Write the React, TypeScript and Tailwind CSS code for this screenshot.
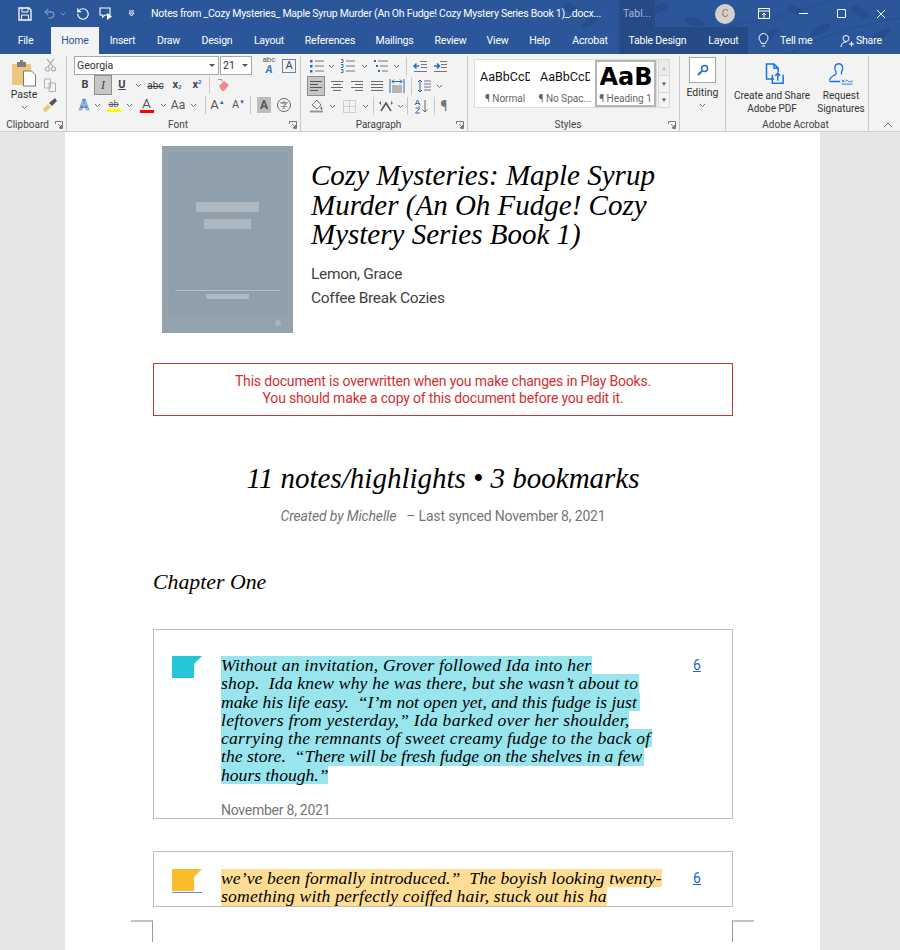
import React from "react";
import { RotateCcw, Undo2 } from "lucide-react";

const ui = "font-['Roboto',sans-serif]";
const serif = "font-['Liberation_Serif',serif] italic";
const roboto = "font-['Roboto',sans-serif]";

const tabs = [
  { t: "Insert", w: "w-[47px]" },
  { t: "Draw", w: "w-[45px]" },
  { t: "Design", w: "w-[52px]" },
  { t: "Layout", w: "w-[52px]" },
  { t: "References", w: "w-[70px]" },
  { t: "Mailings", w: "w-[59px]" },
  { t: "Review", w: "w-[53px]" },
  { t: "View", w: "w-[41px]" },
  { t: "Help", w: "w-[43px]" },
  { t: "Acrobat", w: "w-[58px]" },
];

const Caret = ({ className = "" }: { className?: string }) => (
  <svg width="7" height="5" viewBox="0 0 7 5" className={className}>
    <path d="M1 1l2.5 2.5L6 1" fill="none" stroke="#6a6a6a" strokeWidth="1" />
  </svg>
);

const Launcher = () => (
  <svg width="8" height="8" viewBox="0 0 8 8">
    <path d="M.5 3V.5H7.5V7.5H4.5M3 3l3.5 3.5M6.5 4v2.5H4" fill="none" stroke="#777" strokeWidth="1" />
  </svg>
);

const Sep = ({ h = "h-[18px]" }: { h?: string }) => <div className={`w-px bg-[#c9c9c9] ${h}`} />;

function Cell({ w, children, className = "" }: { w: string; children: React.ReactNode; className?: string }) {
  return <div className={`flex h-5 shrink-0 items-center justify-center ${w} ${className}`}>{children}</div>;
}

function Lines({ n = 4, color = "#6a6a6a", align = "left" }: { n?: number; color?: string; align?: "left" | "center" | "right" | "full" }) {
  const ys = Array.from({ length: n }, (_, i) => 2.5 + i * (9 / (n - 1)));
  return (
    <svg width="14" height="14" viewBox="0 0 14 14">
      {ys.map((y, i) => {
        const short = i % 2 === 1 && align !== "full";
        const x1 = short ? (align === "center" ? 3 : align === "right" ? 5 : 1) : 1;
        const x2 = short ? (align === "center" ? 11 : align === "right" ? 13 : 9) : 13;
        return <path key={i} d={`M${x1} ${y}H${x2}`} stroke={color} strokeWidth="1" />;
      })}
    </svg>
  );
}

function ListIcon({ kind }: { kind: "bullet" | "number" | "multi" }) {
  return (
    <svg width="16" height="14" viewBox="0 0 16 14">
      {[2, 7, 12].map((y, i) => (
        <g key={y}>
          {kind === "bullet" && <rect x="1" y={y - 1} width="2.5" height="2.5" fill="#2b6cb0" />}
          {kind === "number" && <path d={`M1 ${y - 1.5}h2v3H1`} fill="none" stroke="#2b6cb0" strokeWidth="1" />}
          {kind === "multi" && <rect x={1 + i * 2} y={y - 1} width="2" height="2" fill="#2b6cb0" />}
          <path d={`M${kind === "multi" ? 5 + i * 2 : 6} ${y}H15`} stroke="#777" strokeWidth="1" />
        </g>
      ))}
    </svg>
  );
}

function Indent({ flip }: { flip?: boolean }) {
  return (
    <svg width="15" height="13" viewBox="0 0 15 13">
      <path d="M7 1.5h7M8 4.5h6M8 7.5h6M1 11.5h13" stroke="#777" strokeWidth="1" />
      <path d={flip ? "M1 6h5M4 3.5L6.5 6 4 8.5" : "M6 6H1M3.5 3.5L1 6l2.5 2.5"} fill="none" stroke="#2b6cb0" strokeWidth="1.5" />
    </svg>
  );
}

function Group({ w, label, launcher = true, children }: { w: string; label: string; launcher?: boolean; children: React.ReactNode }) {
  return (
    <div className={`flex h-full shrink-0 flex-col ${w}`}>
      <div className="flex h-[62px] flex-1 flex-col border-r border-[#c8c8c8]">{children}</div>
      <div className="flex h-[14px] items-center border-r border-[#c8c8c8] pr-[3px] pt-[1px] text-[10px] leading-none text-[#444]">
        <span className="flex-1 text-center">{label}</span>
        {launcher && <Launcher />}
      </div>
    </div>
  );
}

function ClipboardGroup() {
  return (
    <Group w="w-[67px]" label="Clipboard">
      <div className="flex">
        <div className="flex w-[42px] flex-col items-center pl-[6px] pt-[4px]">
          <svg width="24" height="27" viewBox="0 0 24 27">
            <rect x="0" y="4" width="19" height="21" rx="1" fill="#edc77f" />
            <rect x="5" y="2" width="9" height="5" fill="#7d7d7d" />
            <rect x="8" y="0" width="3" height="3" fill="#7d7d7d" />
            <path d="M11.5 11h8l4 4v11h-12z" fill="#fff" stroke="#777" />
          </svg>
          <span className="mt-[1px] text-[10.5px] leading-[14px] text-[#333]">Paste</span>
          <Caret className="mt-[3px]" />
        </div>
        <div className="flex flex-col items-center gap-[6px] pl-[1px] pt-[2px]">
          <svg width="13" height="14" viewBox="0 0 14 16">
            <path d="M3 1l7 9M11 1L4 10" stroke="#a9a9a9" strokeWidth="1.3" />
            <circle cx="3.5" cy="12.5" r="2.3" fill="none" stroke="#a9a9a9" strokeWidth="1.2" />
            <circle cx="10.5" cy="12.5" r="2.3" fill="none" stroke="#a9a9a9" strokeWidth="1.2" />
          </svg>
          <svg width="14" height="14" viewBox="0 0 14 14">
            <path d="M1.5 1h6v9h-6zM6 5h6.5v8.5H6z" fill="#f3f3f3" stroke="#b0b0b0" />
          </svg>
          <svg width="14" height="14" viewBox="0 0 14 14">
            <path d="M0 11l5-5 3 3-5 5H1z" fill="#edc77f" />
            <path d="M6 5l3 3 5-5-2-3z" fill="#555" />
          </svg>
        </div>
      </div>
    </Group>
  );
}

function FontGroup() {
  return (
    <Group w="w-[234px]" label="Font">
      <div className="flex pl-[7px]">
        <div className="flex h-[19px] w-[145px] items-center justify-between border border-[#a6a6a6] bg-white pl-[2px] pr-[3px] text-[10.5px] text-[#333]">
          Georgia <span className="h-0 w-0 border-x-[3px] border-t-[3px] border-x-transparent border-t-[#555]" />
        </div>
        <div className="ml-px flex h-[19px] w-[32px] items-center justify-between border border-[#a6a6a6] bg-white pl-[2px] pr-[3px] text-[10.5px] text-[#333]">
          21 <span className="h-0 w-0 border-x-[3px] border-t-[3px] border-x-transparent border-t-[#555]" />
        </div>
        <div className="ml-[7px] flex h-[19px] w-[20px] flex-col items-center text-[8px] leading-[8px] text-[#555]">
          <span className="h-[8px]">abc</span>
          <span className="h-[11px] text-[11px] font-bold italic leading-[11px] text-[#3a79c4]">A</span>
        </div>
        <div className="ml-[3px] flex h-[14px] w-[14px] items-center justify-center self-center border border-[#5b86b8] text-[11px] leading-none text-[#444]">A</div>
      </div>
      <div className="flex h-5 items-center pl-[9px] text-[#444]">
        <Cell w="w-[18px]" className="text-[11px] font-bold">B</Cell>
        <Cell w="w-[18px]" className="border border-[#8e8e8e] bg-[#c6c6c6] font-['Liberation_Serif',serif] text-[12px] italic">I</Cell>
        <Cell w="w-[20px]" className="text-[11px] font-bold underline">U</Cell>
        <Cell w="w-[12px]"><Caret /></Cell>
        <Cell w="w-[23px]" className="text-[10px] line-through">abc</Cell>
        <Cell w="w-[20px]" className="text-[11px] font-bold">x<sub className="text-[6px] text-[#2b6cb0]">2</sub></Cell>
        <Cell w="w-[20px]" className="text-[11px] font-bold">x<sup className="text-[6px] text-[#2b6cb0]">2</sup></Cell>
        <div className="ml-[2px]"><Sep /></div>
        <Cell w="w-[27px]">
          <svg width="14" height="14" viewBox="0 0 14 14">
            <path d="M2 8l5-5 5 4-5 6H5z" fill="#ef8a8e" />
            <path d="M1 1.5h4v2" fill="none" stroke="#999" />
          </svg>
        </Cell>
      </div>
      <div className="flex h-5 items-center pl-[9px] text-[#555]">
        <Cell w="w-[16px]" className="text-[14px] font-bold text-[#c9dcf2] [-webkit-text-stroke:0.7px_#3a79c4]">A</Cell>
        <Cell w="w-[11px]"><Caret /></Cell>
        <Cell w="w-[21px]">
          <div className="flex flex-col items-center">
            <span className="text-[9px] leading-[10px] line-through">ab</span>
            <span className="h-[3px] w-[14px] bg-[#ffff00]" />
          </div>
        </Cell>
        <Cell w="w-[11px]"><Caret /></Cell>
        <Cell w="w-[23px]">
          <div className="flex flex-col items-center">
            <span className="text-[13px] leading-[12px]">A</span>
            <span className="h-[3px] w-[14px] bg-[#ff0000]" />
          </div>
        </Cell>
        <Cell w="w-[10px]"><Caret /></Cell>
        <Cell w="w-[20px]" className="text-[12px]">Aa</Cell>
        <Cell w="w-[10px]"><Caret /></Cell>
        <div className="ml-[7px]"><Sep /></div>
        <Cell w="w-[23px]" className="text-[13px]">A<sup className="text-[6px] text-[#2b6cb0]">▲</sup></Cell>
        <Cell w="w-[19px]" className="text-[11px]">A<sup className="text-[6px] text-[#2b6cb0]">▼</sup></Cell>
        <div className="ml-[2px]"><Sep /></div>
        <Cell w="w-[26px]"><span className="flex h-4 w-[14px] items-center justify-center bg-[#bdbdbd] text-[12px] font-bold">A</span></Cell>
        <Cell w="w-[14px]"><span className="flex h-[14px] w-[14px] shrink-0 items-center justify-center rounded-full border border-[#666] font-['Noto_Sans_CJK_SC',sans-serif] text-[8px]">字</span></Cell>
      </div>
    </Group>
  );
}

function ParagraphGroup() {
  return (
    <Group w="w-[167px]" label="Paragraph">
      <div className="flex h-5 items-center pl-[7px]">
        <Cell w="w-[17px]"><ListIcon kind="bullet" /></Cell>
        <Cell w="w-[13px]"><Caret /></Cell>
        <Cell w="w-[20px]"><ListIcon kind="number" /></Cell>
        <Cell w="w-[13px]"><Caret /></Cell>
        <Cell w="w-[19px]"><ListIcon kind="multi" /></Cell>
        <Cell w="w-[13px]"><Caret /></Cell>
        <div className="ml-[3px]"><Sep /></div>
        <Cell w="w-[22px]" className="ml-[2px]"><Indent /></Cell>
        <Cell w="w-[19px]"><Indent flip /></Cell>
      </div>
      <div className="flex h-5 items-center pl-[6px]">
        <Cell w="w-[18px]" className="border border-[#8e8e8e] bg-[#c6c6c6]"><Lines color="#555" /></Cell>
        <Cell w="w-[22px]" className="ml-px"><Lines align="center" /></Cell>
        <Cell w="w-[18px]"><Lines align="right" /></Cell>
        <Cell w="w-[22px]"><Lines align="full" /></Cell>
        <Cell w="w-[18px]">
          <svg width="16" height="16" viewBox="0 0 16 16">
            <path d="M1 1v14M15 1v14" stroke="#2b6cb0" />
            <path d="M3 3.5h10M5 1.5L3 3.5l2 2M11 1.5l2 2-2 2" fill="none" stroke="#2b6cb0" />
            <path d="M3 8h10M3 10h10M3 12h10M3 14h10" stroke="#777" />
          </svg>
        </Cell>
        <div className="ml-[5px]"><Sep /></div>
        <Cell w="w-[24px]">
          <svg width="15" height="16" viewBox="0 0 15 16">
            <path d="M3 2v12M1 4l2-2 2 2M1 12l2 2 2-2" fill="none" stroke="#2b6cb0" />
            <path d="M7 3h7M7 6h7M7 9h7M7 12h7" stroke="#777" />
          </svg>
        </Cell>
        <Cell w="w-[7px]"><Caret /></Cell>
      </div>
      <div className="flex h-5 items-center pl-[7px]">
        <Cell w="w-[18px]">
          <svg width="16" height="16" viewBox="0 0 16 16">
            <path d="M3 7l5-5 4 5-4 4z" fill="#fff" stroke="#777" />
            <path d="M12 8c1 1.5 2 2.5 1 3.5s-2-.5-1-3.5z" fill="#2b6cb0" />
            <path d="M1 13.5h13" stroke="#999" strokeWidth="2" />
          </svg>
        </Cell>
        <Cell w="w-[13px]"><Caret /></Cell>
        <Cell w="w-[20px]">
          <svg width="13" height="13" viewBox="0 0 13 13">
            <path d="M.5.5h12v12H.5z" fill="none" stroke="#aaa" strokeDasharray="1 1" />
            <path d="M6.5.5v12M.5 6.5h12" stroke="#aaa" strokeDasharray="1 1" />
          </svg>
        </Cell>
        <Cell w="w-[12px]"><Caret /></Cell>
        <div className="ml-[2px]"><Sep /></div>
        <Cell w="w-[23px]">
          <svg width="16" height="14" viewBox="0 0 16 14">
            <path d="M3 12L8 4l5 8" fill="none" stroke="#555" strokeWidth="1.5" />
            <path d="M1 4l2-2v4zM15 4l-2-2v4z" fill="#2b6cb0" />
          </svg>
        </Cell>
        <Cell w="w-[7px]"><Caret /></Cell>
        <div className="ml-[3px]"><Sep /></div>
        <Cell w="w-[24px]" className="ml-[1px]">
          <svg width="15" height="15" viewBox="0 0 15 15">
            <path d="M1 6l2.5-5L6 6M2 4.5h3" fill="none" stroke="#2b6cb0" />
            <path d="M1.5 9H6L1.5 14H6" fill="none" stroke="#2b6cb0" />
            <path d="M11 1v12M8.5 10.5L11 13l2.5-2.5" fill="none" stroke="#666" />
          </svg>
        </Cell>
        <div className="ml-[1px]"><Sep /></div>
        <Cell w="w-[18px]" className="text-[14px] text-[#777]">¶</Cell>
      </div>
    </Group>
  );
}

function StyleCard({ sample, name, active }: { sample: string; name: string; active?: boolean }) {
  return (
    <div className={`flex h-full flex-col items-center overflow-hidden ${active ? "w-[61px] border-[2px] border-[#b5b5b5] pt-[1px]" : "w-[60px] pt-[7px]"}`}>
      {active ? (
        <span className="h-[28px] w-[52px] overflow-hidden whitespace-nowrap font-['DejaVu_Sans',sans-serif] text-[24px] font-bold leading-[28px] text-black">{sample}</span>
      ) : (
        <span className="h-[20px] w-[50px] overflow-hidden whitespace-nowrap text-[12.5px] leading-[20px] text-[#111]">{sample}</span>
      )}
      <span className={`whitespace-nowrap text-[10px] leading-[13px] text-[#666] ${active ? "mt-[3px]" : "mt-[5px]"}`}>{name}</span>
    </div>
  );
}

function StylesGroup() {
  return (
    <Group w="w-[212px]" label="Styles">
      <div className="flex pl-[6px] pt-[3px]">
        <div className="flex h-[49px] w-[183px] border border-[#dcdcdc] bg-white">
          <StyleCard sample="AaBbCcDd" name="¶ Normal" />
          <StyleCard sample="AaBbCcDd" name="¶ No Spac..." />
          <StyleCard sample="AaBb" name="¶ Heading 1" active />
        </div>
        <div className="ml-px flex w-[12px] flex-col">
          <div className="flex h-[17px] items-center justify-center border border-[#d8d8d8] bg-[#ebebeb] text-[6px] leading-none text-[#bbb]">▲</div>
          <div className="flex h-[16px] items-center justify-center border-x border-[#d8d8d8] text-[6px] leading-none text-[#555]">▼</div>
          <div className="flex h-[16px] items-center justify-center border border-[#d8d8d8] text-[6px] leading-none text-[#555]">▼</div>
        </div>
      </div>
    </Group>
  );
}

function EditingGroup() {
  return (
    <Group w="w-[46px]" label="" launcher={false}>
      <div className="flex flex-col items-center pt-[1px]">
        <div className="flex h-[26px] w-[27px] items-center justify-center border border-[#a6a6a6] bg-white">
          <svg width="12" height="12" viewBox="0 0 12 12">
            <circle cx="7.5" cy="4.5" r="3" fill="none" stroke="#2b6cb0" strokeWidth="1.5" />
            <path d="M5 7l-4 4" stroke="#2b6cb0" strokeWidth="1.8" />
          </svg>
        </div>
        <span className="mt-[3px] text-[10.5px] leading-[14px] text-[#333]">Editing</span>
        <Caret className="mt-[3px]" />
      </div>
    </Group>
  );
}

function AcrobatGroup() {
  return (
    <Group w="w-[143px]" label="Adobe Acrobat" launcher={false}>
      <div className="flex text-center text-[10px] leading-[13px] text-[#333]">
        <div className="flex w-[92px] flex-col items-center pt-[7px]">
          <svg width="20" height="22" viewBox="0 0 24 26" className="ml-[4px]">
            <path d="M12 19H3V1h9l5 5v5M12 1v5h5" fill="none" stroke="#1473e6" strokeWidth="1.8" />
            <path d="M10 14v10h13V14M16.5 21v-9M13.5 15l3-3 3 3" fill="none" stroke="#1473e6" strokeWidth="1.8" />
          </svg>
          <span className="mt-[4px] whitespace-nowrap">Create and Share<br />Adobe PDF</span>
        </div>
        <div className="flex w-[46px] flex-col items-center pt-[6px]">
          <svg width="26" height="23" viewBox="0 0 28 26">
            <path d="M1 21c0-4 4-5 7-7 1-1 1-2 0-4C6 7 7 2 11.5 2S17 7 15 10c-1 2-1 3 0 4M1 22h12" fill="none" stroke="#1473e6" strokeWidth="1.5" />
            <path d="M15 20l3 3M18 20l-3 3M19 22c1-2 2-2 3 0s2-2 3 0 1 0 2-1" fill="none" stroke="#1473e6" />
            <path d="M15 25h12" stroke="#1473e6" />
          </svg>
          <span className="mt-[4px] whitespace-nowrap">Request<br />Signatures</span>
        </div>
      </div>
    </Group>
  );
}

function TitleBar() {
  return (
    <div className="flex h-[27px] items-center text-[10.5px] text-white">
      <div className="flex w-[151px] items-center pl-[18px]">
        <svg width="14" height="14" viewBox="0 0 14 14">
          <path d="M1 1h10l2 2v10H1z" fill="none" stroke="#fff" strokeWidth="1.3" />
          <path d="M4 1v4h6V1M3.5 13V8h7v5" fill="none" stroke="#fff" />
        </svg>
        <Undo2 size={13} color="#7f9bc7" strokeWidth={2} className="ml-[11px]" />
        <svg width="6" height="4" viewBox="0 0 6 4" className="ml-[4px]"><path d="M.5.5L3 3 5.5.5" fill="none" stroke="#7f9bc7" /></svg>
        <RotateCcw size={14} color="#fff" strokeWidth={2} className="ml-[10px]" />
        <svg width="15" height="14" viewBox="0 0 15 14" className="ml-[9px]">
          <path d="M1 1h10v7H6L3.5 10V8H1z" fill="none" stroke="#fff" strokeWidth="1.1" />
          <path d="M8 6l5 3.5L8 13z" fill="#fff" />
        </svg>
        <svg width="7" height="7" viewBox="0 0 7 7" className="ml-[14px]">
          <path d="M1 1h5M1 3l2.5 3L6 3z" fill="none" stroke="#fff" />
        </svg>
      </div>
      <span className="w-[468px] whitespace-nowrap tracking-[-0.26px]">Notes from _Cozy Mysteries_ Maple Syrup Murder (An Oh Fudge! Cozy Mystery Series Book 1)_.docx...</span>
      <div className="flex h-full w-[36px] items-center justify-center bg-[#244b85] text-[#a9bcd9]">Tabl...</div>
      <div className="ml-[60px] flex h-[20px] w-[20px] items-center justify-center rounded-full bg-[#d6d1cb] text-[10px] text-[#777]">C</div>
      <div className="ml-[23px] flex items-center">
        <svg width="12" height="11" viewBox="0 0 12 11" className="mr-[29px]">
          <path d="M.5.5h11v10H.5zM.5 3h11M6 10V5M4 7l2-2 2 2" fill="none" stroke="#fff" />
        </svg>
        <span className="mr-[29px] h-px w-[9px] bg-white" />
        <span className="mr-[30px] h-[9px] w-[9px] rounded-[1px] border border-white" />
        <svg width="10" height="10" viewBox="0 0 10 10"><path d="M1 1l8 8M9 1L1 9" stroke="#fff" /></svg>
      </div>
    </div>
  );
}

function TabRow() {
  return (
    <div className="flex h-[27px] items-stretch whitespace-nowrap text-[10.5px] tracking-[-0.2px] text-white">
      <div className="flex w-[51px] items-center justify-center">File</div>
      <div className="flex w-[48px] items-center justify-center bg-[#f3f3f3] text-[#2b579a]">Home</div>
      <div className="flex w-[520px]">
        {tabs.map((t) => (
          <div key={t.t} className={`flex items-center justify-center ${t.w}`}>{t.t}</div>
        ))}
      </div>
      <div className="flex w-[129px] items-center justify-center gap-[22px] bg-[#244b85]">
        <span>Table Design</span>
        <span>Layout</span>
      </div>
      <div className="ml-[10px] flex items-center">
        <svg width="11" height="15" viewBox="0 0 11 15">
          <path d="M3.5 10.5C3 8 1 7.5 1 5a4.5 4.5 0 0 1 9 0c0 2.5-2 3-2.5 5.5zM4 13h3" fill="none" stroke="#fff" />
        </svg>
        <span className="ml-[11px] w-[32px]">Tell me</span>
        <svg width="14" height="14" viewBox="0 0 14 14" className="ml-[28px]">
          <circle cx="6" cy="4.5" r="3" fill="none" stroke="#fff" />
          <path d="M1 13c0-3 2-5 5-5M9 10h5M11.5 7.5v5" fill="none" stroke="#fff" />
        </svg>
        <span className="ml-[2px]">Share</span>
      </div>
    </div>
  );
}

function Ribbon() {
  return (
    <div className={`flex h-[78px] border-b border-[#cfcfcf] bg-[#f3f3f3] pt-[2px] ${ui}`}>
      <ClipboardGroup />
      <FontGroup />
      <ParagraphGroup />
      <StylesGroup />
      <EditingGroup />
      <AcrobatGroup />
      <div className="flex flex-1 items-end justify-end pb-[3px] pr-[7px]">
        <svg width="10" height="6" viewBox="0 0 10 6"><path d="M1 5l4-4 4 4" fill="none" stroke="#666" /></svg>
      </div>
    </div>
  );
}

function Cover() {
  return (
    <svg width="131" height="187" viewBox="0 0 131 187" className="shrink-0">
      <rect width="131" height="187" fill="#93a2ad" />
      <rect x="6" y="6" width="119" height="163" fill="#8f9fab" />
      <rect x="34" y="56" width="63" height="10" fill="#adb8c1" />
      <rect x="42" y="73" width="47" height="10" fill="#adb8c1" />
      <rect x="13" y="144" width="105" height="1" fill="#b3bdc6" />
      <rect x="44" y="148" width="43" height="5" fill="#aeb9c2" />
      <circle cx="116" cy="177" r="3" fill="#a9b4bd" />
    </svg>
  );
}

const note1 = [
  { t: "Without an invitation, Grover followed Ida into her", w: "w-[371px] tracking-[0.2px]" },
  { t: "shop.  Ida knew why he was there, but she wasn’t about to", w: "w-[418px] tracking-[0.18px]" },
  { t: "make his life easy.  “I’m not open yet, and this fudge is just", w: "w-[419px]" },
  { t: "leftovers from yesterday,” Ida barked over her shoulder,", w: "w-[408px] tracking-[0.24px]" },
  { t: "carrying the remnants of sweet creamy fudge to the back of", w: "w-[431px] tracking-[0.23px]" },
  { t: "the store.  “There will be fresh fudge on the shelves in a few", w: "w-[423px]" },
  { t: "hours though.”", w: "w-[107px]" },
];

function Flag({ color }: { color: string }) {
  return (
    <svg width="30" height="22" viewBox="0 0 30 22" className="block">
      <path d="M0 0h30l-8 8v14H0z" fill={color} />
    </svg>
  );
}

function NoteText({ line, w, bg }: { line: string; w: string; bg: string }) {
  return (
    <div className={`h-[18.3px] whitespace-pre ${w} ${bg} ${serif} text-[17.6px] leading-[18.3px] text-black`}>{line}</div>
  );
}

function Page() {
  return (
    <div className="relative ml-[65px] h-[818px] w-[755px] bg-white pl-[88px] pr-[87px] pt-[14px]">
      <div className="flex pl-[9px]">
        <Cover />
        <div className="pl-[18px] pt-[15px]">
          <h1 className={`whitespace-pre ${serif} text-[29px] font-normal leading-[29.5px] text-black`}>{"Cozy Mysteries: Maple Syrup\nMurder (An Oh Fudge! Cozy\nMystery Series Book 1)"}</h1>
          <p className={`mt-[12px] ${roboto} text-[15.5px] leading-[24.5px] tracking-[-0.3px] text-[#424242]`}>Lemon, Grace</p>
          <p className={`${roboto} text-[15.5px] leading-[24.5px] tracking-[-0.3px] text-[#424242]`}>Coffee Break Cozies</p>
        </div>
      </div>

      <div className={`mt-[30px] flex h-[53px] flex-col justify-center border border-[#cc3333] text-center ${roboto} text-[14px] leading-[17px] tracking-[-0.18px] text-[#d32f2f]`}>
        <p>This document is overwritten when you make changes in Play Books.</p>
        <p>You should make a copy of this document before you edit it.</p>
      </div>

      <h2 className={`mt-[44px] text-center ${serif} text-[29px] font-normal leading-[36px] text-black`}>11 notes/highlights • 3 bookmarks</h2>
      <p className={`mt-[11px] whitespace-pre text-center ${roboto} text-[14px] leading-[18px] tracking-[-0.16px] text-[#757575]`}>
        <span className="italic">Created by Michelle</span>{"   – Last synced November 8, 2021"}
      </p>
      <h3 className={`mt-[43px] ${serif} text-[21.8px] font-normal leading-[28px] text-black`}>Chapter One</h3>

      <div className="mt-[33px] flex h-[190px] overflow-hidden border border-[#bdbdbd] pl-[18px] pt-[26px]">
        <div className="w-[49px] shrink-0"><Flag color="#26c6da" /></div>
        <div>
          {note1.map((l) => (
            <NoteText key={l.t} line={l.t} w={l.w} bg="bg-[#98e5ee]" />
          ))}
          <p className={`mt-[17px] ${roboto} text-[14px] leading-[18px] tracking-[-0.25px] text-[#757575]`}>November 8, 2021</p>
        </div>
        <a className={`ml-[41px] h-fit ${roboto} text-[14px] leading-[18px] text-[#1a66cc] underline`}>6</a>
      </div>

      <div className="mt-[32px] flex h-[56px] overflow-hidden border border-[#bdbdbd] pl-[18px] pt-[17px]">
        <div className="w-[49px] shrink-0">
          <Flag color="#fbbc29" />
          <div className="mt-px h-px w-[30px] bg-[#5a8fd6]" />
        </div>
        <div className="w-[441px]">
          <NoteText line="we’ve been formally introduced.”  The boyish looking twenty-" w="w-[441px] tracking-[0.08px]" bg="bg-[#ffdd94]" />
          <NoteText line="something with perfectly coiffed hair, stuck out his ha" w="w-[386px] tracking-[0.18px]" bg="bg-[#ffdd94]" />
        </div>
        <a className={`ml-[31px] h-fit ${roboto} text-[14px] leading-[18px] text-[#1a66cc] underline`}>6</a>
      </div>

      {/* crop marks */}
      <div className="absolute bottom-[8px] left-[66px] h-[22px] w-[22px] border-r border-t-2 border-r-[#9a9a9a] border-t-[#c4c4c4]" />
      <div className="absolute bottom-[8px] left-[667px] h-[22px] w-[22px] border-l border-t-2 border-l-[#9a9a9a] border-t-[#c4c4c4]" />
    </div>
  );
}

export default function App() {
  return (
    <div className={`h-[950px] w-[900px] overflow-hidden bg-[#e6e6e6] ${ui}`}>
      <div className="relative overflow-hidden bg-[#2b579a]">
        {/* title bar foliage */}
        <svg width="900" height="54" viewBox="0 0 900 54" className="pointer-events-none absolute left-0 top-0">
          <path d="M700 30C740 24 780 20 830 0M790 54C820 36 860 24 900 18M565 0C580 12 595 20 610 24" fill="none" stroke="#264d8c" strokeWidth="1" />
          <g fill="#264d8c">
            <ellipse cx="570" cy="8" rx="8" ry="4" transform="rotate(30 570 8)" />
            <ellipse cx="590" cy="22" rx="9" ry="4" transform="rotate(-30 590 22)" />
            <ellipse cx="660" cy="8" rx="9" ry="4" transform="rotate(-20 660 8)" />
            <ellipse cx="695" cy="22" rx="11" ry="4" transform="rotate(10 695 22)" />
            <ellipse cx="770" cy="35" rx="10" ry="4" transform="rotate(-30 770 35)" />
            <ellipse cx="795" cy="10" rx="9" ry="4" transform="rotate(25 795 10)" />
            <ellipse cx="820" cy="30" rx="11" ry="4" transform="rotate(-25 820 30)" />
            <ellipse cx="860" cy="12" rx="10" ry="4" transform="rotate(30 860 12)" />
            <ellipse cx="880" cy="36" rx="12" ry="4" transform="rotate(-35 880 36)" />
          </g>
        </svg>
        <div className="relative">
          <TitleBar />
          <TabRow />
        </div>
      </div>
      <Ribbon />
      <Page />
    </div>
  );
}
